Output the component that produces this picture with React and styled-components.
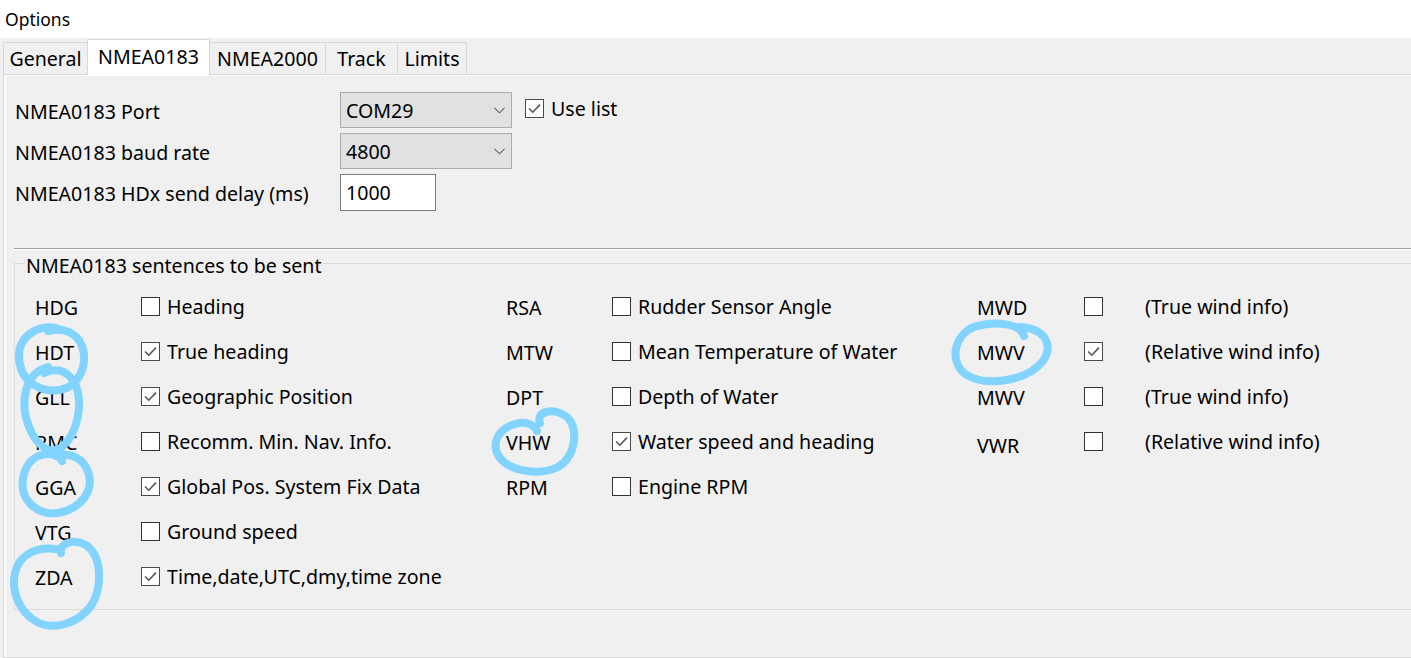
import React from 'react';
import styled, { createGlobalStyle } from 'styled-components';

const GlobalStyle = createGlobalStyle`
  html, body { margin: 0; padding: 0; background: #f0f0f0; overflow: hidden; }
  body {
    font-family: "Noto Sans", "Open Sans", sans-serif;
    font-size: 19.6px;
    color: #000;
  }
  * { box-sizing: border-box; }
`;

const Window = styled.div`
  position: relative;
  width: 1411px;
  height: 658px;
  display: flex;
  flex-direction: column;
  overflow: hidden;
  background: #f0f0f0;
`;

const TitleBar = styled.div`
  height: 38px;
  flex: none;
  background: #fff;
  display: flex;
  align-items: center;
  padding-left: 5px;
  font-size: 17.5px;
`;

const TabBar = styled.div`
  display: flex;
  align-items: flex-end;
  height: 36px;
  flex: none;
  padding-left: 4px;
  position: relative;
  z-index: 1;
`;

const Tab = styled.div`
  width: ${(p) => p.$width}px;
  height: ${(p) => (p.$active ? '36px' : '32px')};
  margin-bottom: ${(p) => (p.$active ? '-1px' : '0')};
  padding-bottom: ${(p) => (p.$active ? '3px' : '0')};
  display: flex;
  align-items: center;
  justify-content: center;
  background: ${(p) => (p.$active ? '#fff' : '#f0f0f0')};
  border: 1px solid #d9d9d9;
  border-bottom: none;
  margin-left: -1px;
  white-space: nowrap;
`;

const Pane = styled.div`
  flex: 1;
  margin-left: 3px;
  border: 1px solid #d9d9d9;
  border-right: none;
  background: #fff;
  padding: 1px 0 0 2px;
  display: flex;
`;

const Panel = styled.div`
  flex: 1;
  background: #f0f0f0;
  padding: 16px 0 0 9px;
  display: flex;
  flex-direction: column;
`;

const Form = styled.div`
  display: grid;
  grid-template-columns: 325px 172px auto;
  grid-auto-rows: 36px;
  row-gap: 5px;
  align-items: center;
`;

const FieldLabel = styled.div`
  white-space: nowrap;
  padding-top: 2px;
`;

const Combo = styled.div`
  height: 36px;
  width: 172px;
  background: #e1e1e1;
  border: 1px solid #adadad;
  display: flex;
  align-items: center;
  justify-content: space-between;
  padding: 0 6px 0 5px;
`;

const TextInput = styled.div`
  height: 37px;
  width: 96px;
  background: #fff;
  border: 1px solid #7a7a7a;
  display: flex;
  align-items: center;
  padding-left: 5px;
`;

const CheckLabel = styled.label`
  display: flex;
  align-items: center;
  gap: 7px;
  align-self: start;
  margin: 3px 0 0 13px;
  white-space: nowrap;
`;

const Box = styled.span`
  width: 19px;
  height: 19px;
  flex: none;
  border: 1px solid ${(p) => (p.$checked ? '#4a4a4a' : '#333')};
  background: #fff;
  display: flex;
  align-items: center;
  justify-content: center;
`;

const Separator = styled.div`
  margin: 38px 0 0 -1px;
  border-top: 1px solid #a0a0a0;
  border-bottom: 1px solid #fff;
`;

const Group = styled.fieldset`
  margin: 0 0 0 -1px;
  padding: 0 0 10px 0;
  border: 1px solid #dcdcdc;
  border-right: none;
  min-width: 0;
`;

const Legend = styled.legend`
  margin-left: 10px;
  padding: 4px 1px 0;
  line-height: 23px;
`;

const SentenceGrid = styled.div`
  display: grid;
  padding: 7px 0 0 20px;
  grid-template-columns: 471px 471px auto;
  grid-template-rows: repeat(7, 45px);
  grid-auto-flow: column;
`;

const Sentence = styled.div`
  display: flex;
  align-items: center;
  white-space: nowrap;
`;

const Code = styled.span`
  width: ${(p) => (p.$wide ? '107px' : '106px')};
  flex: none;
  padding-top: ${(p) => p.$drop || 2}px;
`;

const Description = styled.span`
  margin-left: ${(p) => (p.$wide ? '42px' : '7px')};
`;

const Annotations = styled.svg`
  position: absolute;
  left: 0;
  top: 0;
  pointer-events: none;
`;

const CheckMark = () => (
  <svg width="15" height="15" viewBox="0 0 15 15">
    <path d="M2 7.5 L5.8 11.2 L13 3.6" fill="none" stroke="#555" strokeWidth="1.6" />
  </svg>
);

const Checkbox = ({ checked }) => (
  <Box $checked={checked}>{checked && <CheckMark />}</Box>
);

const Chevron = () => (
  <svg width="11" height="7" viewBox="0 0 11 7">
    <path d="M0.5 0.8 L5.5 5.8 L10.5 0.8" fill="none" stroke="#606060" strokeWidth="1.1" />
  </svg>
);

const col1 = [
  ['HDG', 'Heading', false],
  ['HDT', 'True heading', true],
  ['GLL', 'Geographic Position', true],
  ['RMC', 'Recomm. Min. Nav. Info.', false],
  ['GGA', 'Global Pos. System Fix Data', true],
  ['VTG', 'Ground speed', false],
  ['ZDA', 'Time,date,UTC,dmy,time zone', true],
];

const col2 = [
  ['RSA', 'Rudder Sensor Angle', false],
  ['MTW', 'Mean Temperature of Water', false],
  ['DPT', 'Depth of Water', false],
  ['VHW', 'Water speed and heading', true],
  ['RPM', 'Engine RPM', false],
];

const col3 = [
  ['MWD', '(True wind info)', false],
  ['MWV', '(Relative wind info)', true],
  ['MWV', '(True wind info)', false],
  ['VWR', '(Relative wind info)', false, 7],
];

const pad = (arr) => [...arr, ...Array(7 - arr.length).fill(null)];

const tabs = [
  ['General', 85],
  ['NMEA0183', 123, true],
  ['NMEA2000', 117],
  ['Track', 73],
  ['Limits', 70],
];

const marks = [
  'M62 330 C42 322, 19 334, 19 356 C19 381, 40 393, 60 390 C81 386, 88 362, 82 346 C77 333, 64 327, 48 331',
  'M48 367 C25 373, 19 402, 29 427 C37 446, 50 456, 62 447 C78 433, 83 404, 76 386 C70 373, 60 366, 44 373',
  'M62 461 C58 451, 31 449, 24 474 C17 500, 38 516, 58 513 C81 509, 93 491, 89 475 C85 459, 72 452, 56 456',
  'M61 553 C59 542, 75 539, 86 545 C102 556, 103 587, 91 606 C78 623, 55 631, 37 622 C19 612, 11 591, 15 573 C19 555, 36 546, 56 549',
  'M540 423 C535 411, 555 407, 567 417 C579 429, 576 456, 558 467 C540 476, 510 471, 500 458 C490 444, 498 429, 515 424 C525 421, 534 424, 537 431',
  'M1024 336 C1021 324, 996 320, 974 327 C954 335, 949 361, 965 374 C985 387, 1026 382, 1043 361 C1053 346, 1047 329, 1020 327',
];

const renderRow = (r, i, prefix, wide) =>
  r ? (
    <Sentence key={prefix + i}>
      <Code $wide={wide} $drop={r[3]}>{r[0]}</Code>
      <Checkbox checked={r[2]} />
      <Description $wide={wide}>{r[1]}</Description>
    </Sentence>
  ) : (
    <span key={prefix + i} />
  );

export default function App() {
  return (
    <>
      <GlobalStyle />
      <Window>
        <TitleBar>Options</TitleBar>
        <TabBar>
          {tabs.map(([t, w, a]) => (
            <Tab key={t} $width={w} $active={a}>
              {t}
            </Tab>
          ))}
        </TabBar>
        <Pane>
          <Panel>
            <Form>
              <FieldLabel>NMEA0183 Port</FieldLabel>
              <Combo>
                <span>COM29</span>
                <Chevron />
              </Combo>
              <CheckLabel>
                <Checkbox checked />
                <span>Use list</span>
              </CheckLabel>
              <FieldLabel>NMEA0183 baud rate</FieldLabel>
              <Combo>
                <span>4800</span>
                <Chevron />
              </Combo>
              <span />
              <FieldLabel>NMEA0183 HDx send delay (ms)</FieldLabel>
              <TextInput>1000</TextInput>
              <span />
            </Form>
            <Separator />
            <Group>
              <Legend>NMEA0183 sentences to be sent</Legend>
              <SentenceGrid>
                {pad(col1).map((r, i) => renderRow(r, i, 'a', false))}
                {pad(col2).map((r, i) => renderRow(r, i, 'b', false))}
                {pad(col3).map((r, i) => renderRow(r, i, 'c', true))}
              </SentenceGrid>
            </Group>
          </Panel>
        </Pane>
        <Annotations width="1411" height="658" viewBox="0 0 1411 658">
          {marks.map((d, i) => (
            <path
              key={i}
              d={d}
              fill="none"
              stroke="#82d4ff"
              strokeWidth="8"
              strokeLinecap="round"
              strokeLinejoin="round"
            />
          ))}
        </Annotations>
      </Window>
    </>
  );
}
